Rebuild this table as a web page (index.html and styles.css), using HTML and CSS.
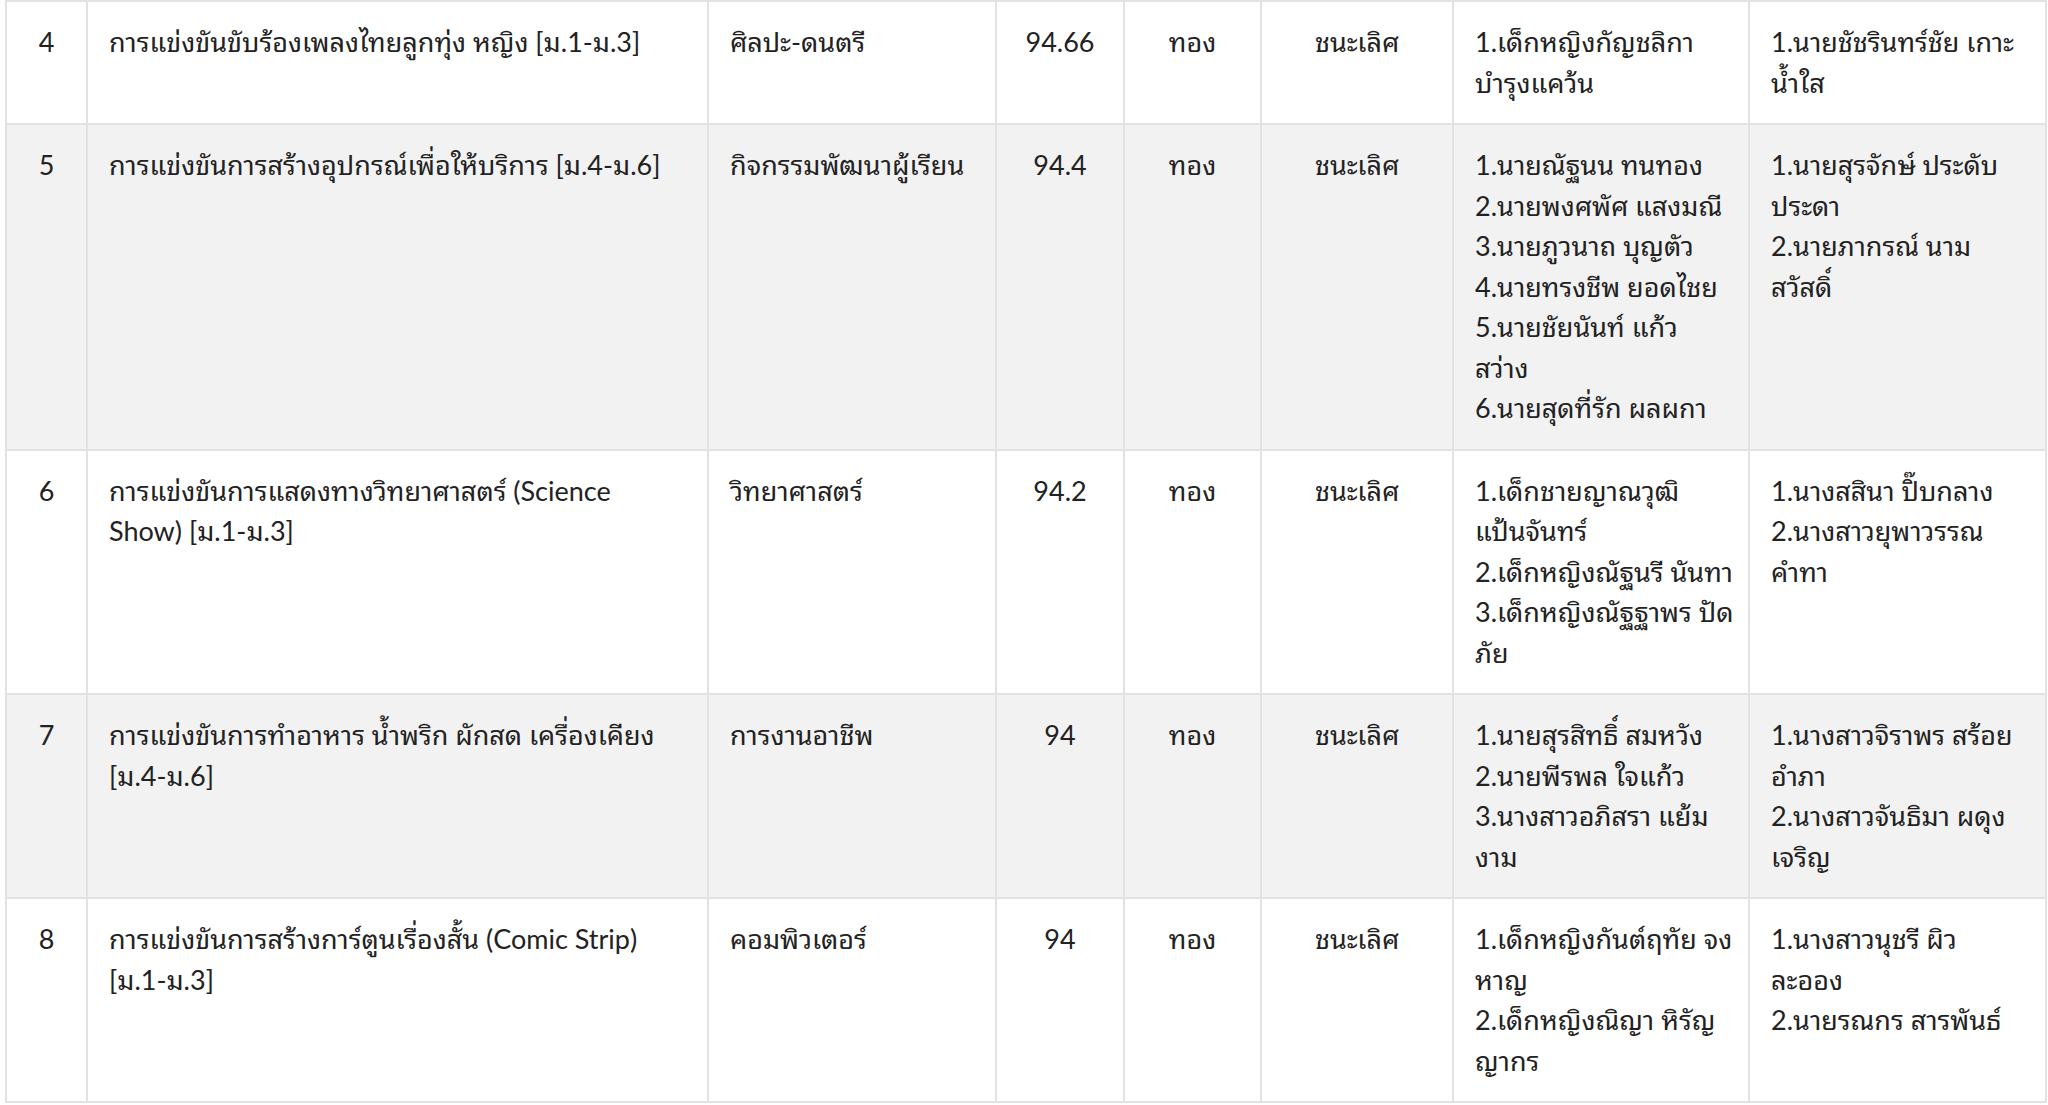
FILE: index.html
```html
<!DOCTYPE html>
<html lang="th">
<head>
<meta charset="utf-8">
<title>ผลการแข่งขัน</title>
<link rel="stylesheet" href="styles.css">
</head>
<body>
<table class="results">
  <colgroup>
    <col class="c-no">
    <col class="c-name">
    <col class="c-group">
    <col class="c-score">
    <col class="c-medal">
    <col class="c-rank">
    <col class="c-students">
    <col class="c-teachers">
  </colgroup>
  <tbody>
    <tr>
      <td class="center">4</td>
      <td>การแข่งขันขับร้องเพลงไทยลูกทุ่ง หญิง [ม.1-ม.3]</td>
      <td>ศิลปะ-ดนตรี</td>
      <td class="center">94.66</td>
      <td class="center">ทอง</td>
      <td class="center">ชนะเลิศ</td>
      <td class="list">1.เด็กหญิงกัญชลิกา<br>บำรุงแคว้น</td>
      <td class="list">1.นายชัชรินทร์ชัย เกาะ<br>น้ำใส</td>
    </tr>
    <tr>
      <td class="center">5</td>
      <td>การแข่งขันการสร้างอุปกรณ์เพื่อให้บริการ [ม.4-ม.6]</td>
      <td>กิจกรรมพัฒนาผู้เรียน</td>
      <td class="center">94.4</td>
      <td class="center">ทอง</td>
      <td class="center">ชนะเลิศ</td>
      <td class="list">1.นายณัฐนน ทนทอง<br>2.นายพงศพัศ แสงมณี<br>3.นายภูวนาถ บุญตัว<br>4.นายทรงชีพ ยอดไชย<br>5.นายชัยนันท์ แก้ว<br>สว่าง<br>6.นายสุดที่รัก ผลผกา</td>
      <td class="list">1.นายสุรจักษ์ ประดับ<br>ประดา<br>2.นายภากรณ์ นาม<br>สวัสดิ์</td>
    </tr>
    <tr>
      <td class="center">6</td>
      <td class="list">การแข่งขันการแสดงทางวิทยาศาสตร์ (Science<br>Show) [ม.1-ม.3]</td>
      <td>วิทยาศาสตร์</td>
      <td class="center">94.2</td>
      <td class="center">ทอง</td>
      <td class="center">ชนะเลิศ</td>
      <td class="list">1.เด็กชายญาณวุฒิ<br>แป้นจันทร์<br>2.เด็กหญิงณัฐนรี นันทา<br>3.เด็กหญิงณัฐฐาพร ปัด<br>ภัย</td>
      <td class="list">1.นางสสินา ปิ๊บกลาง<br>2.นางสาวยุพาวรรณ<br>คำทา</td>
    </tr>
    <tr>
      <td class="center">7</td>
      <td class="list">การแข่งขันการทำอาหาร น้ำพริก ผักสด เครื่องเคียง<br>[ม.4-ม.6]</td>
      <td>การงานอาชีพ</td>
      <td class="center">94</td>
      <td class="center">ทอง</td>
      <td class="center">ชนะเลิศ</td>
      <td class="list">1.นายสุรสิทธิ์ สมหวัง<br>2.นายพีรพล ใจแก้ว<br>3.นางสาวอภิสรา แย้ม<br>งาม</td>
      <td class="list">1.นางสาวจิราพร สร้อย<br>อำภา<br>2.นางสาวจันธิมา ผดุง<br>เจริญ</td>
    </tr>
    <tr>
      <td class="center">8</td>
      <td class="list">การแข่งขันการสร้างการ์ตูนเรื่องสั้น (Comic Strip)<br>[ม.1-ม.3]</td>
      <td>คอมพิวเตอร์</td>
      <td class="center">94</td>
      <td class="center">ทอง</td>
      <td class="center">ชนะเลิศ</td>
      <td class="list">1.เด็กหญิงกันต์ฤทัย จง<br>หาญ<br>2.เด็กหญิงณิญา หิรัญ<br>ญากร</td>
      <td class="list">1.นางสาวนุชรี ผิว<br>ละออง<br>2.นายรณกร สารพันธ์</td>
    </tr>
  </tbody>
</table>
</body>
</html>
```

FILE: styles.css
```css
html, body {
  margin: 0;
  padding: 0;
  background: #ffffff;
}

body {
  font-family: Lato, "Noto Sans Thai Looped", Loma, "Noto Sans Thai", "Noto Sans", sans-serif;
  font-size: 27px;
  line-height: 1.5;
  color: #222222;
}

.results {
  margin-left: 5px;
  width: 2040px;
  border-collapse: collapse;
  table-layout: fixed;
}

.c-no { width: 81px; }
.c-name { width: 621px; }
.c-group { width: 288px; }
.c-score { width: 128px; }
.c-medal { width: 137px; }
.c-rank { width: 192px; }
.c-students { width: 296px; }
.c-teachers { width: 297px; }

.results td {
  border: 2px solid #e2e2e2;
  padding: 20px 20px 20px 21px;
  vertical-align: top;
  text-align: left;
  line-height: 40.5px;
}

.results td.list {
  white-space: nowrap;
}

.results tr:nth-child(even) td {
  background: #f2f2f2;
}

.results td.center {
  text-align: center;
  padding-left: 8px;
  padding-right: 8px;
}
```
